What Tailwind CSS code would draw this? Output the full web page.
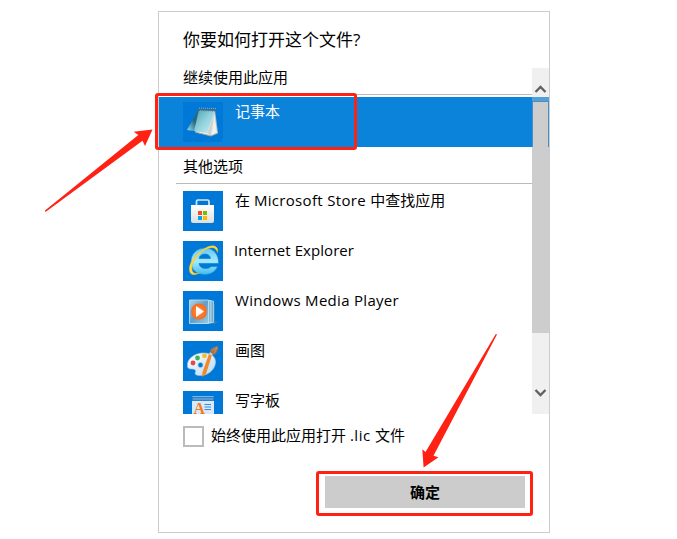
<!DOCTYPE html>
<html lang="zh-CN">
<head>
  <meta charset="UTF-8" />
  <meta name="viewport" content="width=device-width, initial-scale=1.0" />
  <title>你要如何打开这个文件?</title>
  <script src="https://cdn.jsdelivr.net/npm/@tailwindcss/browser@4"></script>
</head>
<body class="relative h-[539px] overflow-hidden bg-white pt-[11px] pl-[158px] font-['Open_Sans','Noto_Sans_CJK_SC',sans-serif] text-[15px] leading-5 text-black">
  <main class="flex h-[522px] w-[392px] flex-col border border-[#ccc]">
    <h1 class="h-14 shrink-0 pt-4 pl-6 text-[17px] leading-6">你要如何打开这个文件?</h1>

    <div class="flex h-[346px] shrink-0 overflow-hidden">
      <!-- app list -->
      <div class="flex w-[373px] shrink-0 flex-col">
        <h2 class="ml-[17px] h-[27px] shrink-0 border-b border-[#bababa] pl-[7px] leading-[18px]">继续使用此应用</h2>
        <button class="mt-0.5 flex h-[50px] shrink-0 gap-3 bg-[#0c83db] pt-[5px] pl-6 text-left leading-[18px] text-white">
          <svg class="size-10 bg-[#0078d7]" viewBox="0 0 40 40">
            <defs>
              <linearGradient id="page" x1="0" y1="0" x2="1" y2="1"><stop stop-color="#4d9fae" /><stop offset=".5" stop-color="#91d2dd" /><stop offset="1" stop-color="#d2edf0" /></linearGradient>
              <linearGradient id="flap" x1="1" y1="0" x2="0" y2="1"><stop stop-color="#2b7189" /><stop offset=".5" stop-color="#276782" /><stop offset="1" stop-color="#94e2e8" /></linearGradient>
            </defs>
            <path d="M32 8l3 23-7 3-16-4z" fill="#b9c0bb" />
            <path d="M31 9l3 22-6 2.500-15-3z" fill="#eef2ef" />
            <path d="M32 10L24 31l4 3z" fill="#cdd5d2" />
            <path d="M15 8L4 28l7 1 7-21z" fill="url(#flap)" />
            <path d="M16 8l16 1-8 22-13-2z" fill="url(#page)" />
            <path d="M16 7.500l17 .5" stroke="#5c6769" stroke-width="3" stroke-dasharray="1 1.200" />
            <path d="M16 6l17 .5" stroke="#bdb9ac" stroke-width=".8" stroke-dasharray="1 1" />
            <path d="M12 30l16 4 7-3" fill="none" stroke="#a5aaa3" stroke-width="1" />
          </svg>
          <span>记事本</span>
        </button>
        <h2 class="mt-[9px] ml-[17px] h-7 shrink-0 border-b border-[#bababa] pl-[7px]">其他选项</h2>

        <ul class="flex flex-col gap-2.5 pt-[7px] pl-6 leading-[18px]">
          <li class="flex h-10 shrink-0 gap-3">
            <svg class="size-10 shrink-0 bg-[#0078d7]" viewBox="0 0 40 40">
              <defs><linearGradient id="bag" x2="0" y2="1"><stop stop-color="#fff" /><stop offset="1" stop-color="#dedede" /></linearGradient></defs>
              <path d="M13.500 15v-4.500a1.500 1.500 0 0 1 1.500-1.500h9.500a1.500 1.500 0 0 1 1.500 1.500V15" fill="none" stroke="#d2e8f8" stroke-width="1.700" />
              <path d="M8 14h23v16a2 2 0 0 1-2 2H10a2 2 0 0 1-2-2z" fill="url(#bag)" />
              <path d="M15 20h4v4h-4z" fill="#f25022" /><path d="M20 20h4v4h-4z" fill="#7fba00" />
              <path d="M15 25h4v4h-4z" fill="#00a4ef" /><path d="M20 25h4v4h-4z" fill="#ffb900" />
            </svg>
            <span class="whitespace-nowrap">在 <span class="tracking-[0.32px]">Microsoft Store </span>中查找应用</span>
          </li>
          <li class="flex h-10 shrink-0 gap-[11px]">
            <svg class="size-10 shrink-0 bg-[#0078d7]" viewBox="0 0 40 40">
              <defs>
                <linearGradient id="e" x2="0" y2="1"><stop stop-color="#63c8f5" /><stop offset=".5" stop-color="#a5e9fc" /><stop offset="1" stop-color="#43bdf0" /></linearGradient>
              </defs>
              <path fill="url(#e)" stroke="#168bd2" stroke-width=".7" fill-rule="evenodd" d="M35.500 22.500H16c.5 3.500 3 5 6.500 5 2.500 0 4.500-.5 5.500-2h6.500c-2 5.500-7 8-13 8C13 33.500 8 28.500 8 20.500S14 7 22 7s14 6 13.500 15.500zM16 17.500h11.500c-.3-3-2.500-4.500-5.500-4.500s-5.500 1.500-6 4.500z" />
              <path fill="#ffdb42" stroke="#eab52a" stroke-width=".4" d="M34.500 11.500C36 5 30 2.500 22.500 7 12 13 5 23 6.500 30c1 4.500 5.500 4.500 10 2-4.500 1-7 0-7.500-3.500C8 21 16 11 25 7.500c5.500-2 8-.5 9.500 4z" />
            </svg>
            <span class="tracking-[0.06px]">Internet Explorer</span>
          </li>
          <li class="flex h-10 shrink-0 gap-3">
            <svg class="size-10 shrink-0 bg-[#0078d7]" viewBox="0 0 40 40">
              <defs>
                <linearGradient id="cover" x2="1" y2="1"><stop stop-color="#afd4e8" /><stop offset=".5" stop-color="#5f9fc8" /><stop offset="1" stop-color="#9bcde5" /></linearGradient>
                <radialGradient id="play"><stop stop-color="#ff9441" /><stop offset="1" stop-color="#f9681b" /></radialGradient>
              </defs>
              <path d="M29 12l3 1v17l3 1-3 2h-6z" fill="#3280b9" />
              <path d="M11 10h19.500v21.500H11z" fill="#6daad0" stroke="#b3dcef" stroke-width=".8" />
              <path d="M8 9.500h20V32H8z" fill="#82b9da" stroke="#c7e5f2" stroke-width=".8" />
              <path d="M6.500 9h19v23.500h-19z" fill="url(#cover)" stroke="#c7e5f2" stroke-width=".8" />
              <circle cx="16" cy="20.500" r="8" fill="url(#play)" />
              <path d="M13 15v11l8-5.500z" fill="#fff" />
            </svg>
            <span class="tracking-[0.3px]">Windows Media Player</span>
          </li>
          <li class="flex h-10 shrink-0 gap-3">
            <svg class="size-10 shrink-0 bg-[#0078d7]" viewBox="0 0 40 40">
              <defs><linearGradient id="palette" x2="1" y2="1"><stop stop-color="#fff" /><stop offset="1" stop-color="#b9daf0" /></linearGradient></defs>
              <path fill="url(#palette)" stroke="#a0cbe5" stroke-width=".6" fill-rule="evenodd" d="M4.500 25c-1-7 7-13 16-13 8 0 12 4 12 9 0 7-7 13.500-15 13.500-5 0-6-1.500-5-3.500s-1-3-4-3-4-1-4-3zM15 24a2.500 2.500 0 1 0 5 0 2.500 2.500 0 0 0-5 0z" />
              <circle cx="10" cy="22" r="2.400" fill="#e5484a" /><circle cx="14.500" cy="17" r="2.400" fill="#3fb252" /><circle cx="21.500" cy="14.800" r="2.400" fill="#f5bd28" />
              <path d="M29 14l-6 19-4 3 .500-5L26 13z" fill="#f0892c" />
              <path d="M26 13l1.500-3 3 2-1.500 3z" fill="#c5cdd0" />
              <path d="M27 11c0-4 3-5 8-6 1 4-1 7-4 9z" fill="#9b7050" /><path d="M29 10l5-4M31 12l3-5" stroke="#d6aa7a" stroke-width=".7" />
            </svg>
            <span>画图</span>
          </li>
          <li class="flex h-10 shrink-0 gap-3">
            <svg class="size-10 shrink-0 bg-[#0078d7]" viewBox="0 0 40 40">
              <path d="M9 5h22v31H9z" fill="#d6eafb" /><path d="M9 5h22v5H9z" fill="#2f7fc5" />
              <path d="M9.500 5.500h21M10 8h20" stroke="#8fc6ee" stroke-width=".8" />
              <text x="10.500" y="23" font-family="Liberation Serif, serif" font-size="16" font-weight="bold" fill="#f47b20">A</text>
              <path d="M21.500 13.500H28M21.500 16H28M21.500 18.500H28" stroke="#3a8cd1" />
            </svg>
            <span>写字板</span>
          </li>
        </ul>
      </div>

      <!-- scrollbar -->
      <div class="flex w-[17px] shrink-0 flex-col bg-[#f0f0f0]">
        <svg class="h-[29px] w-[17px] shrink-0" viewBox="0 0 17 29"><path d="M3.500 24l5-5 5 5" fill="none" stroke="#606060" stroke-width="2.300" /></svg>
        <div class="h-1 shrink-0 bg-[#559fd9]"></div>
        <div class="h-[232px] shrink-0 bg-[#cdcdcd]">
          <div class="h-[46px] border-x border-t border-[#488fc8]"></div>
        </div>
        <svg class="mt-[50px] h-5 w-[17px] shrink-0" viewBox="0 0 17 20"><path d="M3.500 7l5 5 5-5" fill="none" stroke="#606060" stroke-width="2.300" /></svg>
      </div>
    </div>

    <label class="mt-3 flex h-[21px] shrink-0 items-center gap-[7px] pl-6">
      <input type="checkbox" class="size-[21px] appearance-none border-2 border-[#bbb] bg-white" />
      <span class="relative -top-0.5">始终使用此应用打开 <span class="tracking-[0.5px]">.lic </span>文件</span>
    </label>
    <button class="mt-[29px] mr-6 h-8 w-[200px] shrink-0 self-end bg-[#ccc] font-bold">确定</button>
  </main>

  <!-- callouts -->
  <div class="absolute top-[93px] left-[155px] h-[57px] w-[202px] rounded-[3px] border-3 border-[#ff2113]"></div>
  <div class="absolute top-[471px] left-[316px] h-[45px] w-[217px] rounded-[3px] border-3 border-[#ff2113]"></div>
  <svg class="pointer-events-none absolute top-0 left-0" width="677" height="539" fill="#ff2113">
    <path d="M45 210.500L138.300 135l-4.600-3.200 18.800-2.200-7.500 16.400-2.500-5.300L45.500 212z" />
    <path d="M495.800 334L425.500 452l-3.200-2.700 1.300 18.200 14.900-10.200-5-1.500L497 334.500z" />
  </svg>
</body>
</html>
